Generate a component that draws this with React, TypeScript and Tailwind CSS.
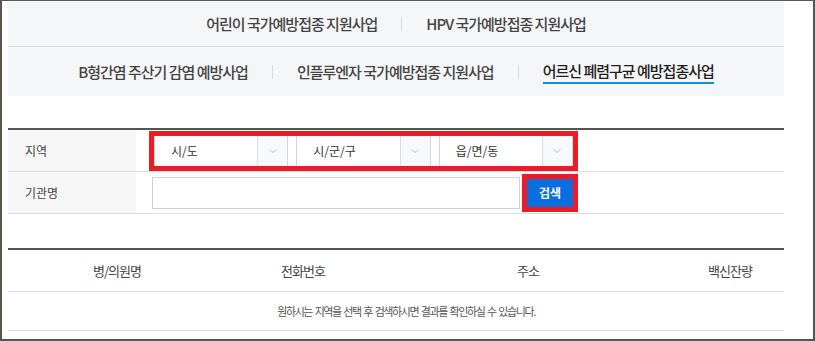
import { ChevronDown } from 'lucide-react';

const tabsTop = ['어린이 국가예방접종 지원사업', 'HPV 국가예방접종 지원사업'];
const tabsBottom = ['B형간염 주산기 감염 예방사업', '인플루엔자 국가예방접종 지원사업', '어르신 폐렴구균 예방접종사업'];

const Sep = () => <span className="mx-6 h-[14px] w-px bg-[#d6d7da]" />;

const TabRow = ({ items, active }: { items: string[]; active?: number }) => (
    <div className="flex items-center justify-center">
        {items.map((t, i) => (
            <div key={t} className="flex items-center">
                {i > 0 && <Sep />}
                <span
                    className={
                        i === active
                            ? 'border-b-2 border-[#0b90e0] pb-px leading-[20px] text-[#1f1f1f]'
                            : 'leading-[20px] text-[#444]'
                    }
                >
                    {t}
                </span>
            </div>
        ))}
    </div>
);

const Select = ({ label }: { label: string }) => (
    <div className="flex h-[30px] flex-1 border-x border-[#d5d6d9] bg-white">
        <span className="flex flex-1 items-center pl-[16px] text-[12px] text-[#333]">{label}</span>
        <span className="flex w-[30px] items-center justify-center border-l border-[#dcdde0] bg-[#f8f9fb]">
            <ChevronDown size={12} strokeWidth={1.5} className="text-[#a5a5a5]" />
        </span>
    </div>
);

const cols = [
    { name: '병/의원명', w: 'w-[218px]' },
    { name: '전화번호', w: 'w-[154px]' },
    { name: '주소', w: 'w-[296px]' },
    { name: '백신잔량', w: 'flex-1' },
];

const App = () => {
    return (
        <div className="h-[341px] w-[815px] overflow-hidden border-2 border-t border-[#55564f] bg-white pl-[6px] pr-[29px] font-['Noto_Sans_CJK_KR',sans-serif]">
            {/* program tabs */}
            <div className="mt-px flex flex-col bg-[#f5f6f8] text-[15px] font-medium tracking-[-1px]">
                <div className="flex h-[45px] items-center justify-center border-b border-[#dcdde0]">
                    <TabRow items={tabsTop} />
                </div>
                <div className="flex h-[49px] items-center justify-center pt-px">
                    <TabRow items={tabsBottom} active={2} />
                </div>
            </div>

            {/* search form */}
            <div className="mt-[32px] border-t-2 border-[#555] text-[12px]">
                <div className="flex h-[42px] border-b border-[#dddddd]">
                    <div className="flex w-[128px] items-center bg-[#f6f6f6] pl-[17px] text-[#444]">지역</div>
                    <div className="flex items-center pl-[13px]">
                        <div className="flex w-[429px] gap-2 border-[5px] border-[#ed1c24]">
                            <Select label="시/도" />
                            <Select label="시/군/구" />
                            <Select label="읍/면/동" />
                        </div>
                    </div>
                </div>
                <div className="flex h-[42px] border-b border-[#dddddd]">
                    <div className="flex w-[128px] items-center bg-[#f6f6f6] pl-[17px] text-[#444]">기관명</div>
                    <div className="flex items-center gap-[2px] pl-4">
                        <input className="h-[32px] w-[368px] border border-[#cfd0d3] bg-white outline-none" />
                        <div className="border-[5px] border-[#ed1c24]">
                            <button className="flex h-[28px] w-[46px] items-center justify-center bg-[#0a6ee0] text-[12px] font-bold text-white">
                                검색
                            </button>
                        </div>
                    </div>
                </div>
            </div>

            {/* results */}
            <div className="mt-[34px] border-t-2 border-[#555] text-[#444]">
                <div className="flex h-[42px] items-center border-b border-[#dddddd] text-[13px] tracking-[-1px]">
                    {cols.map((c) => (
                        <span key={c.name} className={`${c.w} text-center`}>
                            {c.name}
                        </span>
                    ))}
                </div>
                <div className="flex h-[39px] items-center justify-center border-b border-[#dddddd] pl-5 text-[11px] tracking-[-1.4px] text-[#555] [word-spacing:1.5px]">
                    원하시는 지역을 선택 후 검색하시면 결과를 확인하실 수 있습니다.
                </div>
            </div>
        </div>
    );
};

export default App;
